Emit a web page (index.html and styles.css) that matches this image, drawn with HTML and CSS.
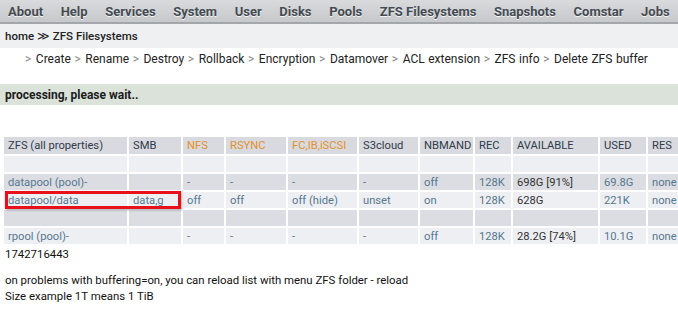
FILE: index.html
```html
<!DOCTYPE html>
<html>
<head>
<meta charset="utf-8">
<link rel="stylesheet" href="styles.css">
</head>
<body>
<nav class="menu">
  <span>About</span><span>Help</span><span>Services</span><span>System</span><span>User</span><span>Disks</span><span>Pools</span><span>ZFS Filesystems</span><span>Snapshots</span><span>Comstar</span><span>Jobs</span>
</nav>
<div class="crumb">home <span class="raq">&#8811;</span> ZFS Filesystems</div>
<div class="sub">
  <span class="gt">&gt;</span> Create <span class="gt">&gt;</span> Rename <span class="gt">&gt;</span> Destroy <span class="gt">&gt;</span> Rollback <span class="gt">&gt;</span> Encryption <span class="gt">&gt;</span> Datamover <span class="gt">&gt;</span> ACL extension <span class="gt">&gt;</span> ZFS info <span class="gt">&gt;</span> Delete ZFS buffer
</div>
<div class="status">processing, please wait..</div>
<table class="zfs">
  <colgroup>
    <col class="c1"><col class="c2"><col class="c3"><col class="c4"><col class="c5"><col class="c6"><col class="c7"><col class="c8"><col class="c9"><col class="c10"><col class="c11">
  </colgroup>
  <tr class="head">
    <td>ZFS (all properties)</td><td>SMB</td><td class="or">NFS</td><td class="or">RSYNC</td><td class="or">FC,IB,iSCSI</td><td>S3cloud</td><td>NBMAND</td><td>REC</td><td>AVAILABLE</td><td>USED</td><td>RES</td>
  </tr>
  <tr class="light"><td></td><td></td><td></td><td></td><td></td><td></td><td></td><td></td><td></td><td></td><td></td></tr>
  <tr class="dark">
    <td>datapool (pool)-</td><td></td><td>-</td><td>-</td><td>-</td><td>-</td><td>off</td><td>128K</td><td class="av">698G [91%]</td><td>69.8G</td><td>none</td>
  </tr>
  <tr class="light sel">
    <td class="selbox"><span class="box"></span>datapool/data</td><td>data,g</td><td>off</td><td>off</td><td>off (hide)</td><td>unset</td><td>on</td><td>128K</td><td class="av">628G</td><td>221K</td><td>none</td>
  </tr>
  <tr class="dark"><td></td><td></td><td></td><td></td><td></td><td></td><td></td><td></td><td></td><td></td><td></td></tr>
  <tr class="light">
    <td>rpool (pool)-</td><td></td><td>-</td><td>-</td><td>-</td><td>-</td><td>off</td><td>128K</td><td class="av">28.2G [74%]</td><td>10.1G</td><td>none</td>
  </tr>
</table>
<div class="foot">
  <p>1742716443</p>
  <p class="gap">on problems with buffering=on, you can reload list with menu ZFS folder - reload<br>Size example 1T means 1 TiB</p>
</div>
</body>
</html>
```
FILE: styles.css
```css
html, body {
  margin: 0;
  padding: 0;
  background: #fff;
  font-family: Roboto, "Open Sans", sans-serif;
  font-size: 12px;
  color: #222;
  width: 678px;
  overflow: hidden;
}
.menu {
  height: 22px;
  background: linear-gradient(#d9dadc, #c6c8cb);
  border-bottom: 2px solid #a3a6ab;
  display: flex;
  align-items: center;
  padding-left: 8px;
  gap: 17.6px;
  white-space: nowrap;
  font-weight: bold;
  font-size: 13px;
  color: #444a52;
  text-shadow: 0 1px 0 #f4f4f4;
}
.crumb {
  height: 24px;
  background: #eff0f2;
  display: flex;
  align-items: center;
  padding-left: 5px;
  font-weight: 500;
  font-size: 11.5px;
  color: #222;
  white-space: pre;
}
.raq { font-weight: normal; }
.sub {
  padding: 3px 0 0 25px;
  height: 33px;
  line-height: 16px;
  color: #222;
  word-spacing: 0.6px;
}
.gt { color: #888; margin-right: 1px; }
.status {
  height: 21px;
  background: #dbe2d9;
  display: flex;
  align-items: center;
  padding-left: 5px;
  font-weight: bold;
  color: #1c1c1c;
}
.zfs {
  margin: 30px 0 0 2px;
  border-collapse: separate;
  border-spacing: 2px;
  table-layout: fixed;
  width: 688px;
  color: #56788f;
  font-size: 11.2px;
}
.zfs td {
  height: 16px;
  padding: 0 0 0 4px;
  white-space: nowrap;
  overflow: hidden;
  vertical-align: middle;
  line-height: 15px;
}
.c1 { width: 123px; }
.c2 { width: 52px; }
.c3 { width: 41px; }
.c4 { width: 60px; }
.c5 { width: 69px; }
.c6 { width: 59px; }
.c7 { width: 53px; }
.c8 { width: 36px; }
.c9 { width: 85px; }
.c10 { width: 46px; }
.c11 { width: 40px; }
.head td { background: #d9dadf; color: #2f3a4c; height: 17px; }
.head td.or { color: #e2912c; }
.light td { background: #eeeff3; }
.dark td { background: #dcdde2; }
.zfs td.av { color: #333; }
.selbox { position: relative; overflow: visible !important; }
.box {
  position: absolute;
  left: 1px;
  top: -1px;
  width: 170px;
  height: 12px;
  border: 3px solid #e8101a;
  box-shadow: 1px 1px 2px rgba(0,0,0,0.35);
  pointer-events: none;
}
.foot { padding-left: 5px; color: #111; line-height: 16px; font-size: 11.4px; }
.foot p { margin: 0; }
.foot .gap { margin-top: 10px; }
```
